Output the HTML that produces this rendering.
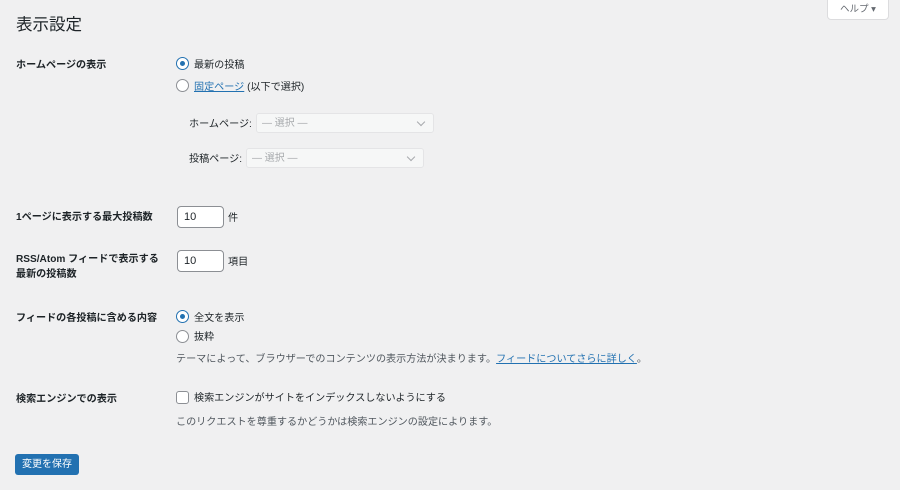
<!DOCTYPE html>
<html><head><meta charset="utf-8"><style>
body{margin:0;width:900px;height:490px;background:#f0f0f1;font-family:"Liberation Sans","Noto Sans CJK JP",sans-serif;color:#1d2327;font-size:10.1px;position:relative;overflow:hidden}
.a{position:absolute;white-space:nowrap}
.b{font-weight:bold}
.r{position:absolute;width:11px;height:11px;border:1px solid #8c8f94;border-radius:50%;background:#fff}
.r.on::after{content:"";position:absolute;left:3px;top:3px;width:5px;height:5px;border-radius:50%;background:#2271b1}
.r.on{border-color:#2271b1}
.sel{position:absolute;height:20px;border:1px solid #e4e4e6;background:#f6f7f7;border-radius:3px;color:#a7aaad;font-size:10px;line-height:20px;padding-left:5px;box-sizing:border-box}
.sel::after{content:"";position:absolute;right:9px;top:5px;width:5px;height:5px;border-right:1px solid #a7aaad;border-bottom:1px solid #a7aaad;transform:rotate(45deg)}
.in{position:absolute;width:47px;height:22px;border:1px solid #8c8f94;border-radius:4px;background:#fff;box-sizing:border-box;line-height:21px;padding-left:6px;font-size:11px}
a{color:#2271b1;text-decoration:underline}
.g{color:#50575e}
</style></head><body>
<div class="a" style="left:16px;top:11px;font-size:16.5px">表示設定</div>
<div class="a" style="left:827px;top:-1px;width:62px;height:21px;background:#fff;border:1px solid #dcdcde;border-radius:0 0 4px 4px;box-sizing:border-box;text-align:center;line-height:19px;font-size:9.5px;color:#646970">ヘルプ ▾</div>

<div class="a b" style="left:16px;top:56px">ホームページの表示</div>
<div class="r on" style="left:176px;top:57px"></div>
<div class="a" style="left:194px;top:56px">最新の投稿</div>
<div class="r" style="left:176px;top:79px"></div>
<div class="a" style="left:194px;top:78px"><a>固定ページ</a> (以下で選択)</div>
<div class="a" style="left:189px;top:115px">ホームページ:</div>
<div class="sel" style="left:256px;top:113px;width:178px">— 選択 —</div>
<div class="a" style="left:189px;top:150px">投稿ページ:</div>
<div class="sel" style="left:246px;top:148px;width:178px">— 選択 —</div>

<div class="a b" style="left:16px;top:208px">1ページに表示する最大投稿数</div>
<div class="in" style="left:177px;top:206px">10</div>
<div class="a" style="left:228px;top:209px">件</div>

<div class="a b" style="left:16px;top:252px;line-height:15px">RSS/Atom フィードで表示する<br>最新の投稿数</div>
<div class="in" style="left:177px;top:250px">10</div>
<div class="a" style="left:228px;top:253px">項目</div>

<div class="a b" style="left:16px;top:309px">フィードの各投稿に含める内容</div>
<div class="r on" style="left:176px;top:310px"></div>
<div class="a" style="left:194px;top:309px">全文を表示</div>
<div class="r" style="left:176px;top:330px"></div>
<div class="a" style="left:194px;top:328px">抜粋</div>
<div class="a g" style="left:176px;top:350px">テーマによって、ブラウザーでのコンテンツの表示方法が決まります。<a>フィードについてさらに詳しく</a>。</div>

<div class="a b" style="left:16px;top:390px">検索エンジンでの表示</div>
<div class="a" style="left:176px;top:391px;width:11px;height:11px;border:1px solid #8c8f94;border-radius:3px;background:#fff"></div>
<div class="a" style="left:194px;top:389px">検索エンジンがサイトをインデックスしないようにする</div>
<div class="a g" style="left:176px;top:413px">このリクエストを尊重するかどうかは検索エンジンの設定によります。</div>

<div class="a" style="left:15px;top:454px;width:64px;height:21px;background:#2271b1;border-radius:3px;color:#fff;font-size:10px;line-height:21px;text-align:center">変更を保存</div>
</body></html>
